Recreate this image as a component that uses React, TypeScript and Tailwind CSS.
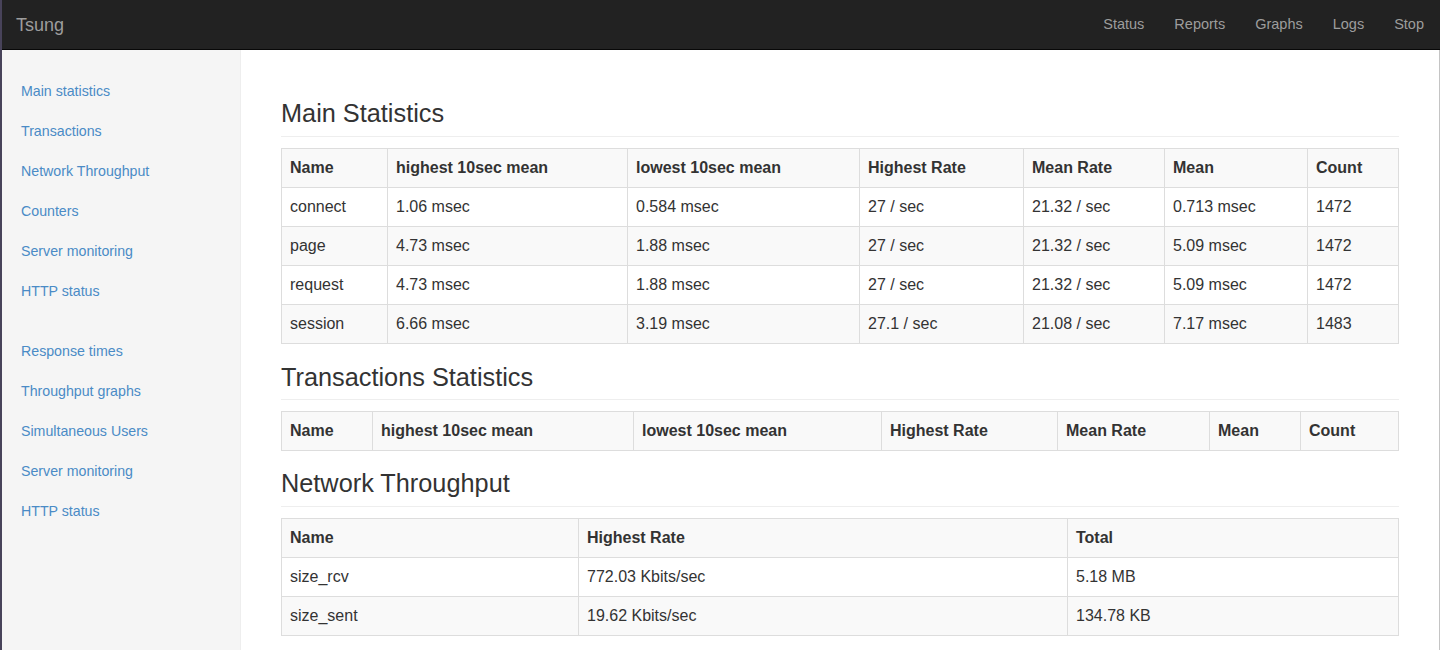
import React from "react";

const font = { fontFamily: '"Liberation Sans", Arial, Helvetica, sans-serif' };

type TableProps = { widths: string[]; head: string[]; rows: string[][]; mb: string };

function StatTable({ widths, head, rows, mb }: TableProps) {
  return (
    <table className={`w-full table-fixed border-collapse border border-[#ddd] text-[16px] leading-[22px] text-[#333] ${mb}`}>
      <colgroup>
        {widths.map((w, i) => (
          <col key={i} className={w} />
        ))}
      </colgroup>
      <thead>
        <tr className="bg-[#f9f9f9]">
          {head.map((h, i) => (
            <th key={i} className="border border-[#ddd] px-2 py-2 text-left font-bold whitespace-nowrap">
              {h}
            </th>
          ))}
        </tr>
      </thead>
      <tbody>
        {rows.map((r, ri) => (
          <tr key={ri} className={ri % 2 === 1 ? "bg-[#f9f9f9]" : "bg-white"}>
            {r.map((c, ci) => (
              <td key={ci} className="border border-[#ddd] px-2 py-2 whitespace-nowrap">
                {c}
              </td>
            ))}
          </tr>
        ))}
      </tbody>
    </table>
  );
}

function Heading({ children }: { children: React.ReactNode }) {
  return (
    <h2 className="text-[25.3px] leading-[27.5px] font-medium text-[#333] pb-[8px] border-b border-[#eee] mb-[11px]">
      {children}
    </h2>
  );
}

export default function App() {
  const group1 = ["Main statistics", "Transactions", "Network Throughput", "Counters", "Server monitoring", "HTTP status"];
  const group2 = ["Response times", "Throughput graphs", "Simultaneous Users", "Server monitoring", "HTTP status"];
  const navLinks = ["Status", "Reports", "Graphs", "Logs", "Stop"];

  return (
    <div style={font} className="w-full min-h-[650px] flex flex-col border-l-2 border-[#48435a] pr-[1px] bg-white">
      <nav className="h-[50px] shrink-0 bg-[#222] border-b border-[#080808] flex items-center justify-between">
        <span className="pl-[14px] text-[18px] text-[#9d9d9d] pt-[1px]">Tsung</span>
        <ul className="flex pr-[1px] pt-[1px]">
          {navLinks.map((l) => (
            <li key={l} className="px-[15px] text-[14.5px] text-[#9d9d9d]">
              {l}
            </li>
          ))}
        </ul>
      </nav>
      <div className="flex flex-1 border-r border-[#c4c4c4]">
        <aside className="w-[239px] shrink-0 bg-[#f5f5f5] border-r border-[#eee] pt-[21px] text-[14.2px] leading-[20px]">
          <ul className="mb-5">
            {group1.map((l, i) => (
              <li key={i} className="pl-[19px] py-[10px] text-[#4a8bc6]">
                {l}
              </li>
            ))}
          </ul>
          <ul className="mb-5">
            {group2.map((l, i) => (
              <li key={i} className="pl-[19px] py-[10px] text-[#4a8bc6]">
                {l}
              </li>
            ))}
          </ul>
        </aside>
        <main className="flex-1 px-10 pt-[50px]">
          <Heading>Main Statistics</Heading>
          <StatTable
            mb="mb-5"
            widths={["w-[106px]", "w-[240px]", "w-[232px]", "w-[164px]", "w-[141px]", "w-[143px]", "w-[91px]"]}
            head={["Name", "highest 10sec mean", "lowest 10sec mean", "Highest Rate", "Mean Rate", "Mean", "Count"]}
            rows={[
              ["connect", "1.06 msec", "0.584 msec", "27 / sec", "21.32 / sec", "0.713 msec", "1472"],
              ["page", "4.73 msec", "1.88 msec", "27 / sec", "21.32 / sec", "5.09 msec", "1472"],
              ["request", "4.73 msec", "1.88 msec", "27 / sec", "21.32 / sec", "5.09 msec", "1472"],
              ["session", "6.66 msec", "3.19 msec", "27.1 / sec", "21.08 / sec", "7.17 msec", "1483"],
            ]}
          />
          <Heading>Transactions Statistics</Heading>
          <StatTable
            mb="mb-[19px]"
            widths={["w-[91px]", "w-[261px]", "w-[248px]", "w-[176px]", "w-[152px]", "w-[91px]", "w-[98px]"]}
            head={["Name", "highest 10sec mean", "lowest 10sec mean", "Highest Rate", "Mean Rate", "Mean", "Count"]}
            rows={[]}
          />
          <Heading>Network Throughput</Heading>
          <StatTable
            mb="mb-5"
            widths={["w-[297px]", "w-[489px]", "w-[331px]"]}
            head={["Name", "Highest Rate", "Total"]}
            rows={[
              ["size_rcv", "772.03 Kbits/sec", "5.18 MB"],
              ["size_sent", "19.62 Kbits/sec", "134.78 KB"],
            ]}
          />
        </main>
      </div>
    </div>
  );
}
